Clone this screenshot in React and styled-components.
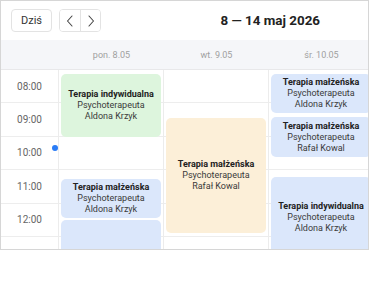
import React from "react";
import styled, { createGlobalStyle } from "styled-components";

const GlobalStyle = createGlobalStyle`
  html, body { margin: 0; padding: 0; background: #fff; }
  body { font-family: Roboto, "Noto Sans", sans-serif; color: #222; }
  * { box-sizing: border-box; }
`;

const Frame = styled.div`
  width: 369px;
  height: 250px;
  border: 1px solid #d6d6d6;
  overflow: hidden;
  display: flex;
  flex-direction: column;
  background: #fff;
`;

const Toolbar = styled.div`
  height: 39px;
  flex: none;
  display: flex;
  align-items: center;
  padding: 0 10px;
  gap: 7px;
`;

const TodayButton = styled.button`
  height: 23px;
  padding: 0 9px;
  border: 1px solid #e3e3e3;
  border-radius: 4px;
  background: #fff;
  font-family: Roboto, sans-serif;
  font-size: 11px;
  color: #333;
`;

const NavGroup = styled.div`
  display: flex;
  height: 23px;
  border: 1px solid #e3e3e3;
  border-radius: 4px;
  overflow: hidden;
`;

const NavButton = styled.button`
  width: 20px;
  height: 100%;
  padding: 0;
  border: none;
  border-left: ${(p) => (p.$divider ? "1px solid #e3e3e3" : "none")};
  background: #fff;
  display: flex;
  align-items: center;
  justify-content: center;
`;

const Title = styled.div`
  flex: 1;
  text-align: right;
  padding-right: 38px;
  font-size: 13.4px;
  font-weight: 700;
  color: #222;
`;

const HeaderRow = styled.div`
  flex: none;
  height: 30px;
  display: grid;
  grid-template-columns: 58px repeat(3, 105px);
  background: #f5f6f9;
  border-bottom: 1px solid #e8e8ea;
`;

const DayLabel = styled.div`
  display: flex;
  align-items: center;
  justify-content: center;
  font-size: 9px;
  color: #a0a0a0;
`;

const Body = styled.div`
  flex: 1;
  display: grid;
  grid-template-columns: 58px repeat(3, 105px);
  align-items: start;
`;

const TimeColumn = styled.div`
  position: relative;
  border-right: 1px solid #ececec;
`;

const Slot = styled.div`
  height: 33.4px;
  border-bottom: 1px solid #ededed;
  display: flex;
  align-items: center;
  justify-content: center;
  font-size: 10px;
  color: #666;
`;

const NowDot = styled.div`
  position: absolute;
  right: 0px;
  top: 75px;
  width: 6px;
  height: 6px;
  border-radius: 50%;
  background: #2a7cf6;
`;

const DayColumn = styled.div`
  position: relative;
  border-right: 1px solid #ececec;
`;

const EmptySlot = styled.div`
  height: 33.4px;
  border-bottom: 1px solid #ededed;
`;

const palette = {
  green: "#ddf5dd",
  blue: "#dbe7fb",
  peach: "#fcefd8",
};

const Event = styled.div`
  position: absolute;
  left: 2px;
  right: 2px;
  border-radius: 5px;
  background: ${(p) => palette[p.$tone]};
  display: flex;
  flex-direction: column;
  align-items: center;
  justify-content: center;
  text-align: center;
  font-size: 9px;
  line-height: 11px;
  color: #3a3a3a;
  overflow: hidden;
`;

const EventTitle = styled.div`
  font-weight: 700;
  color: #222;
`;

const Chevron = ({ dir }) => (
  <svg width="8" height="12" viewBox="0 0 8 12" fill="none">
    <path
      d={dir === "left" ? "M6 1 L1.5 6 L6 11" : "M2 1 L6.5 6 L2 11"}
      stroke="#444"
      strokeWidth="1.1"
      strokeLinecap="round"
      strokeLinejoin="round"
    />
  </svg>
);

const hours = ["08:00", "09:00", "10:00", "11:00", "12:00", "13:00"];
const days = ["pon. 8.05", "wt. 9.05", "śr. 10.05"];

const events = [
  [
    { top: 4, height: 63, tone: "green", title: "Terapia indywidualna", role: "Psychoterapeuta", who: "Aldona Krzyk" },
    { top: 109, height: 39, tone: "blue", title: "Terapia małżeńska", role: "Psychoterapeuta", who: "Aldona Krzyk" },
    { top: 150, height: 80, tone: "blue" },
  ],
  [
    { top: 48, height: 115, tone: "peach", title: "Terapia małżeńska", role: "Psychoterapeuta", who: "Rafał Kowal" },
  ],
  [
    { top: 4, height: 39, tone: "blue", title: "Terapia małżeńska", role: "Psychoterapeuta", who: "Aldona Krzyk" },
    { top: 47, height: 40, tone: "blue", title: "Terapia małżeńska", role: "Psychoterapeuta", who: "Rafał Kowal" },
    { top: 107, height: 80, tone: "blue", title: "Terapia indywidualna", role: "Psychoterapeuta", who: "Aldona Krzyk" },
  ],
];

export default function App() {
  return (
    <>
      <GlobalStyle />
      <Frame>
        <Toolbar>
          <TodayButton>Dziś</TodayButton>
          <NavGroup>
            <NavButton aria-label="Poprzedni">
              <Chevron dir="left" />
            </NavButton>
            <NavButton $divider aria-label="Następny">
              <Chevron dir="right" />
            </NavButton>
          </NavGroup>
          <Title>8 — 14 maj 2026</Title>
        </Toolbar>
        <HeaderRow>
          <div />
          {days.map((d) => (
            <DayLabel key={d}>{d}</DayLabel>
          ))}
        </HeaderRow>
        <Body>
          <TimeColumn>
            {hours.map((h) => (
              <Slot key={h}>{h}</Slot>
            ))}
            <NowDot />
          </TimeColumn>
          {events.map((list, i) => (
            <DayColumn key={i}>
              {hours.map((h) => (
                <EmptySlot key={h} />
              ))}
              {list.map((ev, j) => (
                <Event key={j} $tone={ev.tone} style={{ top: ev.top, height: ev.height }}>
                  {ev.title && <EventTitle>{ev.title}</EventTitle>}
                  {ev.role && <div>{ev.role}</div>}
                  {ev.who && <div>{ev.who}</div>}
                </Event>
              ))}
            </DayColumn>
          ))}
        </Body>
      </Frame>
    </>
  );
}
